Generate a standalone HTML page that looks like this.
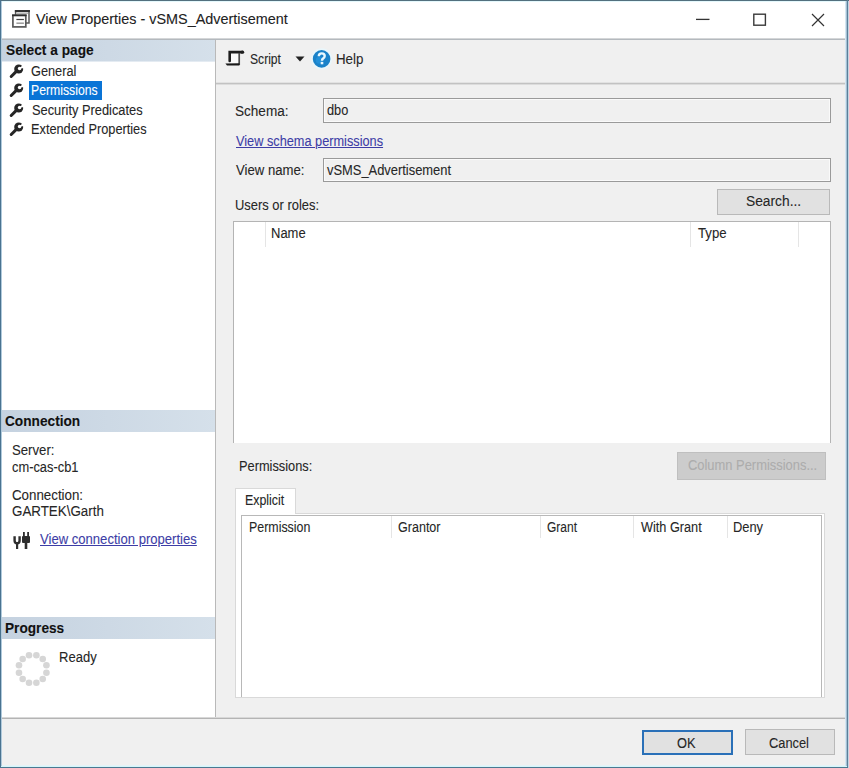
<!DOCTYPE html>
<html><head><meta charset="utf-8">
<style>
html,body{margin:0;padding:0;}
body{width:849px;height:768px;position:relative;overflow:hidden;background:#f0f0f0;font-family:"Liberation Sans",sans-serif;color:#1c1c1c;}
.a{position:absolute;}
.t{position:absolute;white-space:nowrap;line-height:16px;font-size:15.5px;transform-origin:0 0;color:#262626;-webkit-text-stroke:0.1px currentColor;}
.hd{position:absolute;left:2px;width:213px;background:linear-gradient(to right,#c5d2e0,#d5e0ea);}
.tb{position:absolute;background:#f0f0f0;border:1px solid #9a9a9a;box-sizing:border-box;box-shadow:inset 0 0 0 1px #fafafa;}
.btn{position:absolute;background:#e1e1e1;border:1px solid #b9b9b9;box-sizing:border-box;}
.colsep{position:absolute;width:1px;background:#e5e5e5;}
</style></head><body>
<!-- window border -->
<div class="a" style="left:0;top:0;width:849px;height:768px;background:#f0f0f0;"></div>
<div class="a" style="left:848px;top:0;width:1px;height:768px;background:#c4d4e2;"></div>
<div class="a" style="left:0;top:0;width:849px;height:1px;background:#53707e;"></div>
<div class="a" style="left:0;top:1px;width:847px;height:1px;background:#e4f8fc;"></div>
<div class="a" style="left:0;top:0;width:1px;height:768px;background:#4a7390;"></div>
<div class="a" style="left:1px;top:1px;width:1px;height:766px;background:#b0cadc;"></div>
<div class="a" style="left:847px;top:0;width:1px;height:768px;background:#5a7f9a;"></div>
<div class="a" style="left:846px;top:1px;width:1px;height:766px;background:#a4bfd2;"></div>
<div class="a" style="left:845px;top:1px;width:1px;height:766px;background:#d4e6f2;"></div>
<div class="a" style="left:0;top:767px;width:848px;height:1px;background:#4a7890;"></div>
<div class="a" style="left:1px;top:766px;width:846px;height:1px;background:#d6f6fa;"></div>
<div class="a" style="left:2px;top:765px;width:843px;height:1px;background:#e4f4f8;"></div>
<!-- title bar -->
<div class="a" style="left:2px;top:2px;width:843px;height:36px;background:#ffffff;"></div>
<div class="a" style="left:2px;top:38px;width:843px;height:1px;background:#d4d6d8;"></div>
<div class="a" style="left:2px;top:39px;width:843px;height:1px;background:#b4b9be;"></div>
<svg class="a" style="left:8px;top:6px" width="26" height="26" viewBox="0 0 26 26">
 <rect x="7.6" y="4.8" width="13.4" height="12.2" fill="#fff" stroke="#5a5a5a" stroke-width="1.5"/>
 <rect x="6.9" y="4" width="15" height="2.1" fill="#333"/>
 <rect x="8.6" y="6.6" width="11.4" height="1.3" fill="#b0b0b0"/>
 <rect x="4.9" y="9.3" width="12.9" height="11.6" fill="#fff" stroke="#5a5a5a" stroke-width="1.7"/>
 <rect x="4" y="8.5" width="14.6" height="1.7" fill="#2e2e2e"/>
 <rect x="8.4" y="12.9" width="7.5" height="1.2" fill="#444"/>
 <rect x="8.4" y="16.6" width="7.5" height="1.1" fill="#777"/>
</svg>
<div class="t" style="left:36px;top:12px;font-size:14.4px;line-height:15px;color:#222;">View Properties - vSMS_Advertisement</div>
<svg class="a" style="left:690px;top:8px" width="140" height="24" viewBox="690 8 140 24"><path d="M696 19.4 H709.5" stroke="#333" stroke-width="1.3"/><rect x="753.8" y="14.2" width="11.6" height="11" fill="none" stroke="#3a3a3a" stroke-width="1.4"/></svg>

<svg class="a" style="left:811px;top:13px" width="14" height="14" viewBox="0 0 14 14">
  <path d="M1 1 L13 13 M13 1 L1 13" stroke="#333" stroke-width="1.2"/>
</svg>

<!-- left pane -->
<div class="a" style="left:2px;top:40px;width:213px;height:677px;background:#ffffff;"></div>
<div class="a" style="left:215px;top:40px;width:1px;height:677px;background:#b9b9b9;"></div>
<div class="hd" style="top:40px;height:21px;"></div>
<div class="a" style="left:2px;top:61px;width:213px;height:1px;background:#e4ebf2;"></div>
<div class="hd" style="top:410px;height:22px;"></div>
<div class="hd" style="top:617px;height:22px;"></div>

<svg width="0" height="0" style="position:absolute"><defs>
<g id="wr"><path d="M2.2 12.5 L6.6 8.1" stroke="#262626" stroke-width="3" stroke-linecap="round"/>
<circle cx="9.7" cy="5" r="4.5" fill="#262626"/>
<path d="M10.5 4.3 L14.6 0.3 L15 4.2 Z" fill="#fff"/><circle cx="10.6" cy="4.5" r="1.8" fill="#fff"/></g>
</defs></svg>
<svg class="a" style="left:9px;top:64px" width="15" height="15" viewBox="0 0 15 15"><use href="#wr"/></svg>
<svg class="a" style="left:9px;top:83px" width="15" height="15" viewBox="0 0 15 15"><use href="#wr"/></svg>
<div class="a" style="left:29px;top:81px;width:73px;height:19px;background:#0a74d6;"></div>
<svg class="a" style="left:9px;top:103px" width="15" height="15" viewBox="0 0 15 15"><use href="#wr"/></svg>
<svg class="a" style="left:9px;top:122px" width="15" height="15" viewBox="0 0 15 15"><use href="#wr"/></svg>

<svg class="a" style="left:12px;top:531px" width="20" height="20" viewBox="0 0 20 20">
  <path d="M2.6 5.2 V9.6 Q2.6 12.4 5.1 12.4 Q7.6 12.4 7.6 9.6 V5.2" fill="none" stroke="#2e2e2e" stroke-width="2.4"/>
  <rect x="4" y="11" width="2.2" height="7" fill="#2e2e2e"/>
  <rect x="10" y="5" width="8" height="7" rx="1" fill="#2e2e2e"/>
  <rect x="11" y="1" width="1.8" height="4.5" fill="#2e2e2e"/>
  <rect x="15.2" y="1" width="1.8" height="4.5" fill="#2e2e2e"/>
  <rect x="12.7" y="11" width="2.6" height="7" fill="#2e2e2e"/>
</svg>
<svg class="a" style="left:12px;top:648px" width="41" height="41" viewBox="0 0 41 41"><g fill="#d6d6d6"><circle cx="34.42" cy="24.68" r="3.3"/><circle cx="30.74" cy="31.04" r="3.3"/><circle cx="24.38" cy="34.72" r="3.3"/><circle cx="17.02" cy="34.72" r="3.3"/><circle cx="10.66" cy="31.04" r="3.3"/><circle cx="6.98" cy="24.68" r="3.3"/><circle cx="6.98" cy="17.32" r="3.3"/><circle cx="10.66" cy="10.96" r="3.3"/><circle cx="17.02" cy="7.28" r="3.3"/><circle cx="24.38" cy="7.28" r="3.3"/><circle cx="30.74" cy="10.96" r="3.3"/><circle cx="34.42" cy="17.32" r="3.3"/></g></svg>

<!-- right pane toolbar -->
<div class="a" style="left:216px;top:82px;width:629px;height:1px;background:#e2e2e2;"></div>
<div class="a" style="left:216px;top:83px;width:629px;height:1px;background:#c2c2c2;"></div>
<div class="a" style="left:216px;top:84px;width:629px;height:1px;background:#dcdcdc;"></div>
<svg class="a" style="left:222px;top:46px" width="26" height="26" viewBox="0 0 26 26">
  <rect x="8.5" y="7" width="8.5" height="10.5" fill="#fafafa"/>
  <path d="M17.2 7.2 V19" fill="none" stroke="#4a4a4a" stroke-width="1.7"/>
  <path d="M7.7 15 V6.1 H20" fill="none" stroke="#1e1e1e" stroke-width="2.6" stroke-linecap="round"/>
  <path d="M20.2 6.2 H20.6" stroke="#1e1e1e" stroke-width="3.2" stroke-linecap="round"/>
  <path d="M3.4 17.4 L5 19.6 H17.4 V17.3 Z" fill="#1a1a1a"/>
</svg>
<svg class="a" style="left:294.7px;top:56px" width="10" height="6" viewBox="0 0 10 6"><path d="M0.5 0.5 H9.5 L5 5.5Z" fill="#222"/></svg>
<svg class="a" style="left:310px;top:47px" width="23" height="23" viewBox="0 0 23 23">
  <circle cx="11.6" cy="11.9" r="10.6" fill="#e9f6fb"/>
  <circle cx="11.6" cy="11.9" r="8.8" fill="#1a82c9"/>
  <circle cx="9.3" cy="13.3" r="3.5" fill="#2596e0" opacity="0.7"/>
  <path d="M8.8 9.3 Q8.8 6.4 11.8 6.4 Q14.7 6.4 14.7 9.1 Q14.7 10.7 13 11.6 Q12 12.2 12 13.8" fill="none" stroke="#e8f8ff" stroke-width="2.4"/>
  <rect x="10.7" y="14.9" width="2.6" height="2.4" fill="#e8f8ff"/>
</svg>

<!-- form -->
<div class="tb" style="left:323px;top:98px;width:508px;height:25px;"></div>
<div class="tb" style="left:323px;top:158px;width:508px;height:24px;"></div>
<div class="btn" style="left:717px;top:189px;width:113px;height:26px;"></div>

<!-- users list -->
<div class="a" style="left:233px;top:221px;width:598px;height:222px;background:#fff;border:1px solid #b4b4b4;box-sizing:border-box;border-bottom:none;"></div>
<div class="colsep" style="left:265px;top:222px;height:25px;"></div>
<div class="colsep" style="left:690px;top:222px;height:25px;"></div>
<div class="colsep" style="left:798px;top:222px;height:25px;"></div>

<div class="btn" style="left:677px;top:452px;width:149px;height:28px;background:#cccccc;border-color:#bfbfbf;"></div>

<!-- tab -->
<div class="a" style="left:235px;top:513px;width:590px;height:185px;background:#fff;border:1px solid #d9d9d9;box-sizing:border-box;"></div>
<div class="a" style="left:235px;top:488px;width:61px;height:26px;background:#fff;border:1px solid #d9d9d9;border-bottom:none;box-sizing:border-box;"></div>
<div class="a" style="left:241px;top:515px;width:581px;height:182px;background:#fff;border:1px solid #b8b8b8;border-bottom:none;box-sizing:border-box;"></div>
<div class="colsep" style="left:391px;top:516px;height:22px;"></div>
<div class="colsep" style="left:540px;top:516px;height:22px;"></div>
<div class="colsep" style="left:633px;top:516px;height:22px;"></div>
<div class="colsep" style="left:727px;top:516px;height:22px;"></div>

<!-- bottom bar -->
<div class="a" style="left:2px;top:717px;width:843px;height:1px;background:#d8d8d8;"></div>
<div class="a" style="left:2px;top:718px;width:843px;height:1px;background:#b4b4b4;"></div>
<div class="btn" style="left:642px;top:730px;width:91px;height:25px;border:2px solid #2a70b8;"></div>
<div class="btn" style="left:745px;top:729px;width:90px;height:26px;"></div>

<div class="t" style="left:5.70px;top:42.0px;transform:scaleX(0.885);font-weight:bold;color:#111;">Select a page</div>
<div class="t" style="left:5.30px;top:413.2px;transform:scaleX(0.882);font-weight:bold;color:#111;">Connection</div>
<div class="t" style="left:4.82px;top:619.6px;transform:scaleX(0.881);font-weight:bold;color:#111;">Progress</div>
<div class="t" style="left:31.00px;top:62.5px;transform:scaleX(0.823);">General</div>
<div class="t" style="left:31.21px;top:82.1px;transform:scaleX(0.789);color:#fff;">Permissions</div>
<div class="t" style="left:32.00px;top:101.7px;transform:scaleX(0.828);">Security Predicates</div>
<div class="t" style="left:31.18px;top:121.3px;transform:scaleX(0.823);">Extended Properties</div>
<div class="t" style="left:11.70px;top:442.3px;transform:scaleX(0.849);">Server:</div>
<div class="t" style="left:11.70px;top:459.0px;transform:scaleX(0.830);">cm-cas-cb1</div>
<div class="t" style="left:11.70px;top:486.8px;transform:scaleX(0.859);">Connection:</div>
<div class="t" style="left:11.70px;top:502.6px;transform:scaleX(0.862);">GARTEK\Garth</div>
<div class="t" style="left:40.00px;top:530.6px;transform:scaleX(0.844);color:#3d3da6;text-decoration:underline;">View connection properties</div>
<div class="t" style="left:59.16px;top:649.4px;transform:scaleX(0.840);">Ready</div>
<div class="t" style="left:249.90px;top:50.7px;transform:scaleX(0.781);">Script</div>
<div class="t" style="left:336.14px;top:50.7px;transform:scaleX(0.859);">Help</div>
<div class="t" style="left:235.30px;top:102.9px;transform:scaleX(0.875);">Schema:</div>
<div class="t" style="left:327.10px;top:102.3px;transform:scaleX(0.824);">dbo</div>
<div class="t" style="left:236.00px;top:133.0px;transform:scaleX(0.822);color:#3d3da6;text-decoration:underline;">View schema permissions</div>
<div class="t" style="left:235.90px;top:162.2px;transform:scaleX(0.848);">View name:</div>
<div class="t" style="left:326.60px;top:161.9px;transform:scaleX(0.832);">vSMS_Advertisement</div>
<div class="t" style="left:235.17px;top:196.8px;transform:scaleX(0.834);">Users or roles:</div>
<div class="t" style="left:746.00px;top:192.6px;transform:scaleX(0.889);">Search...</div>
<div class="t" style="left:271.16px;top:224.6px;transform:scaleX(0.838);">Name</div>
<div class="t" style="left:698.00px;top:224.6px;transform:scaleX(0.849);">Type</div>
<div class="t" style="left:239.17px;top:457.9px;transform:scaleX(0.825);">Permissions:</div>
<div class="t" style="left:688.00px;top:457.3px;transform:scaleX(0.833);color:#acacac;">Column Permissions...</div>
<div class="t" style="left:245.20px;top:492.0px;transform:scaleX(0.799);">Explicit</div>
<div class="t" style="left:249.00px;top:518.6px;transform:scaleX(0.800);">Permission</div>
<div class="t" style="left:398.20px;top:518.6px;transform:scaleX(0.809);">Grantor</div>
<div class="t" style="left:546.70px;top:518.6px;transform:scaleX(0.775);">Grant</div>
<div class="t" style="left:640.60px;top:518.6px;transform:scaleX(0.819);">With Grant</div>
<div class="t" style="left:732.87px;top:518.6px;transform:scaleX(0.830);">Deny</div>
<div class="t" style="left:676.70px;top:734.7px;transform:scaleX(0.828);">OK</div>
<div class="t" style="left:769.40px;top:734.7px;transform:scaleX(0.828);">Cancel</div>
</body></html>
